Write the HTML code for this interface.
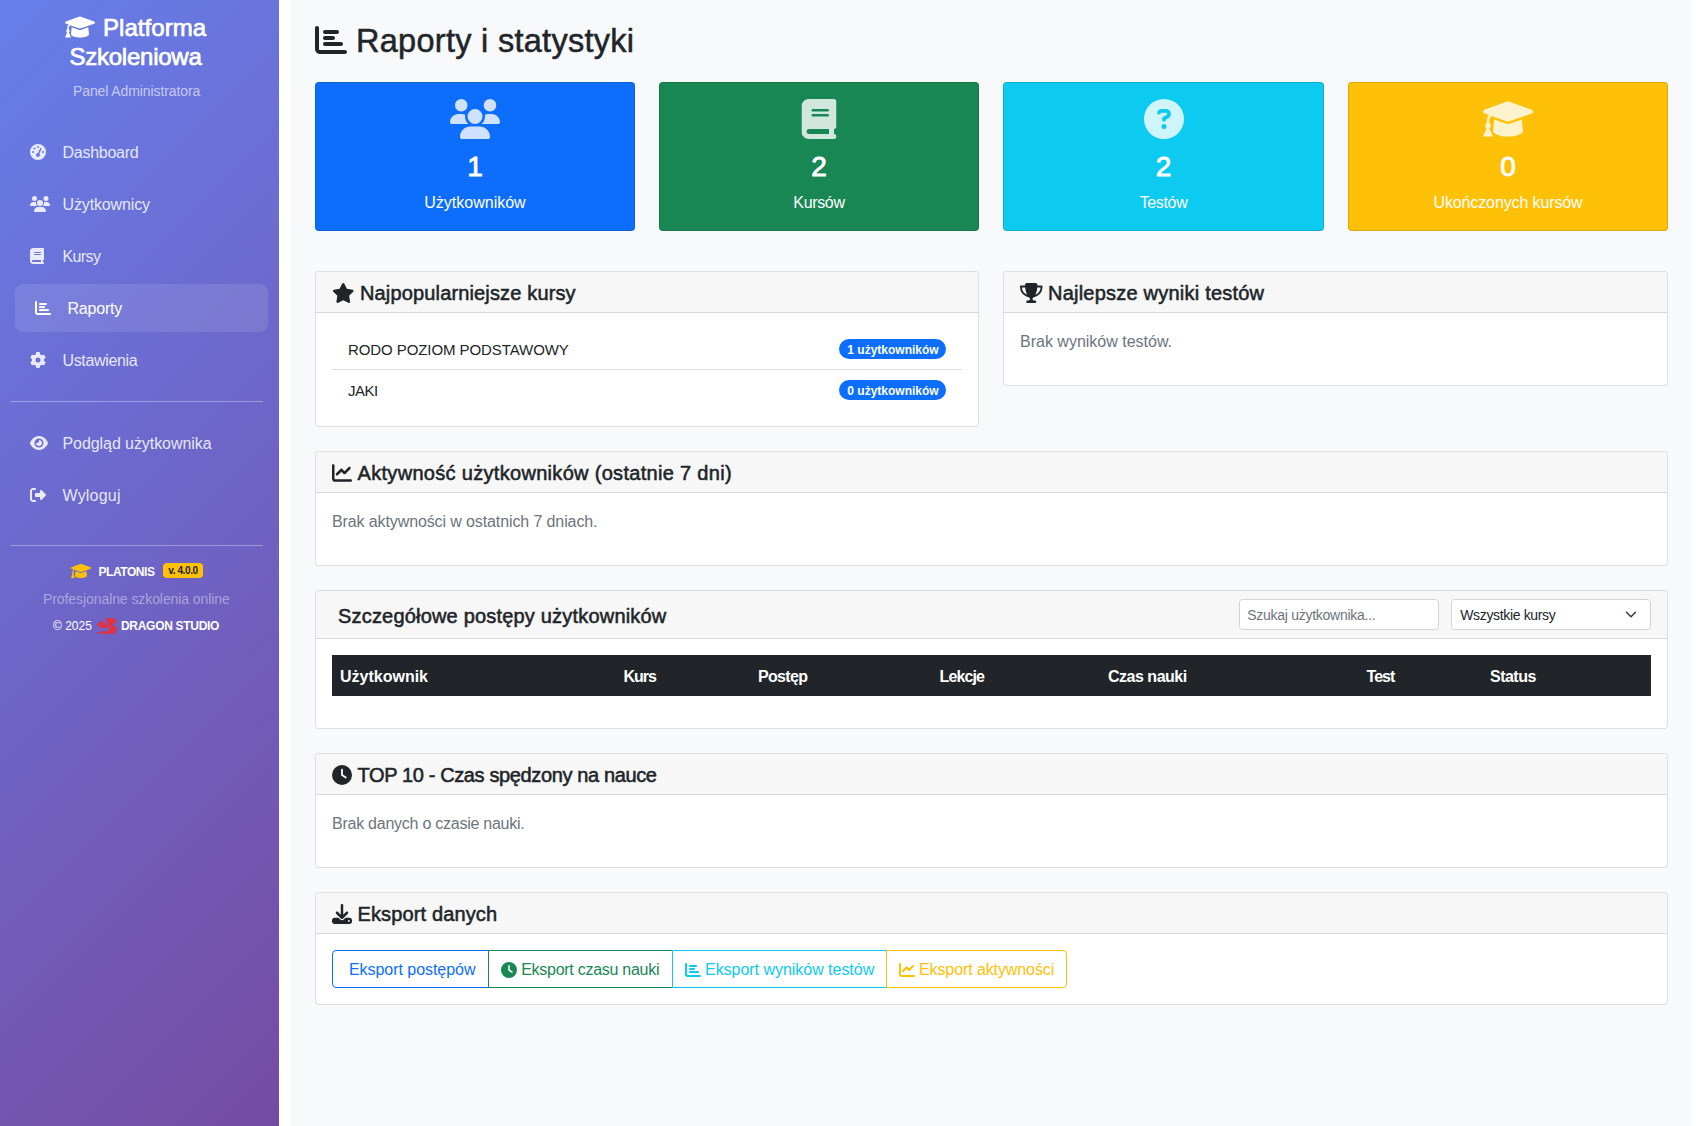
<!DOCTYPE html>
<html lang="pl">
<head>
<meta charset="utf-8">
<title>Raporty i statystyki</title>
<style>
*{box-sizing:border-box;margin:0;padding:0}
html,body{width:1696px;height:1126px;overflow:hidden;background:#fff;font-family:"Liberation Sans",sans-serif;color:#212529;font-size:16px;line-height:1.5}
.abs{position:absolute}
svg{display:block}
#sidebar{position:absolute;left:0;top:0;width:279px;height:1126px;background:linear-gradient(135deg,#667eea 0%,#764ba2 100%)}
#main{position:absolute;left:291px;top:0;width:1401px;height:1126px;background:#f8f9fa}
.t{position:absolute;white-space:nowrap}
.nav{position:absolute;left:15px;width:253px;height:48px;border-radius:8px}
.nav.active{background:rgba(255,255,255,0.1)}
.nav svg{position:absolute;fill:rgba(255,255,255,0.85)}
.nav .lbl{position:absolute;left:47.5px;top:13.3px;line-height:24px;color:rgba(255,255,255,0.85);font-size:16px;white-space:nowrap}
.nav.active svg{fill:#fff}
.nav.active .lbl{color:#fff}
.hr{position:absolute;left:10px;width:253px;height:1px;background:rgba(255,255,255,0.35)}
.stat{position:absolute;top:82px;width:320px;height:149px;border:1px solid rgba(0,0,0,0.125);border-radius:4px;color:#fff;text-align:center}
.stat svg{position:absolute;top:16px;left:50%;transform:translateX(-50%);fill:rgba(255,255,255,0.8)}
.stat .num{position:absolute;left:0;right:0;top:66.5px;font-size:28px;line-height:34px;-webkit-text-stroke:0.9px #fff}
.stat .lbl{position:absolute;left:0;right:0;top:108px;font-size:16px;line-height:24px}
.card{position:absolute;background:#fff;border:1px solid rgba(0,0,0,0.125);border-radius:4px;overflow:hidden}
.ch{position:absolute;left:0;top:0;right:0;height:41px;background:#f7f7f7;border-bottom:1px solid rgba(0,0,0,0.125)}
.ch .ttl{position:absolute;left:16px;top:9px;font-size:20px;line-height:24px;white-space:nowrap;color:#212529;-webkit-text-stroke:0.55px #212529}
.ch svg.hic{position:absolute;fill:#212529}
.muted{color:#6c757d}
.badge{position:absolute;height:20px;border-radius:10px;background:#0d6efd;color:#fff;font-size:12px;font-weight:bold;line-height:20px;padding-top:0.7px;padding-left:1px;text-align:center;white-space:nowrap}
.btn{position:absolute;top:950px;height:38px;border:1px solid;font-size:16px;line-height:24px;padding:6px 0;white-space:nowrap;background:#fff}
.btn svg{display:inline-block;vertical-align:-2px}
</style>
</head>
<body>
<div id="sidebar">
  <!-- header -->
  <svg class="abs" style="left:65px;top:14.5px" width="30" height="24" viewBox="0 0 640 512"><path fill="#fff" d="M623.1 136.9l-282.7-101.2c-13.73-4.91-28.7-4.91-42.43 0L16.05 136.9C6.438 140.4 0 149.6 0 159.8s6.438 19.45 16.05 22.89L76.41 204.3C58.09 226.3 48 253.6 48 282.4v23.05C36.05 311.1 27.94 324.5 27.94 339.9c0 14.23 7.125 26.52 17.83 34.38L0 480h128l-45.77-105.8C92.94 366.3 100.1 354 100.1 339.9c0-15.41-8.117-28.74-20.07-35.29V282.4c0-24.84 9.313-48.06 26.06-66.1l191.9 68.740C304.9 287.5 312.1 288 320 288s15.07-.5 21.23-2.875l281.9-101C633.6 180.9 640 171.7 640 160.9C640 150.7 633.6 140.4 623.1 136.9zM351.1 314.8C341.7 318.2 330.9 320 320 320c-10.92 0-21.69-1.814-32-5.406L143.1 262.6L128 408c0 35.34 85.960 72 192 72s192-36.66 192-72l-15.96-145.4L351.1 314.8z"/></svg>
  <div class="t" style="left:103px;top:13px;font-size:24px;line-height:29px;color:#fff;-webkit-text-stroke:0.7px #fff;letter-spacing:0.05px">Platforma</div>
  <div class="t" style="left:69.5px;top:42px;font-size:24px;line-height:29px;color:#fff;-webkit-text-stroke:0.7px #fff;letter-spacing:-0.25px">Szkoleniowa</div>
  <div class="t" style="left:73px;top:82px;font-size:14px;line-height:18px;color:rgba(255,255,255,0.62);letter-spacing:-0.1px">Panel Administratora</div>

  <div class="nav" style="top:128px">
    <svg style="left:15px;top:16px" width="16" height="16" viewBox="0 0 512 512"><path d="M0 256a256 256 0 1 1 512 0A256 256 0 1 1 0 256zM288 96a32 32 0 1 0 -64 0 32 32 0 1 0 64 0zM256 416c35.3 0 64-28.700 64-64c0-17.4-6.9-33.1-18.1-44.6L366 161.7c5.3-12.1-.2-26.3-12.3-31.6s-26.3 .2-31.6 12.3L257.9 288c-.6 0-1.3 0-1.9 0c-35.3 0-64 28.7-64 64s28.7 64 64 64zM176 144a32 32 0 1 0 -64 0 32 32 0 1 0 64 0zM96 288a32 32 0 1 0 0-64 32 32 0 1 0 0 64zm352-32a32 32 0 1 0 -64 0 32 32 0 1 0 64 0z"/></svg>
    <div class="lbl" style="letter-spacing:-0.27px">Dashboard</div>
  </div>
  <div class="nav" style="top:180px">
    <svg style="left:15px;top:16px" width="20" height="16" viewBox="0 0 640 512"><path d="M144 0a80 80 0 1 1 0 160A80 80 0 1 1 144 0zM512 0a80 80 0 1 1 0 160A80 80 0 1 1 512 0zM0 298.7C0 239.8 47.8 192 106.7 192h42.7c15.9 0 31 3.5 44.6 9.7c-1.3 7.2-1.9 14.7-1.9 22.3c0 38.2 16.8 72.5 43.3 96c-.2 0-.4 0-.7 0H21.3C9.6 320 0 310.4 0 298.7zM405.3 320c-.2 0-.4 0-.7 0c26.6-23.5 43.3-57.8 43.3-96c0-7.6-.7-15-1.9-22.3c13.6-6.3 28.7-9.7 44.6-9.7h42.7C592.2 192 640 239.8 640 298.7c0 11.8-9.600 21.3-21.3 21.3H405.3zM224 224a96 96 0 1 1 192 0 96 96 0 1 1 -192 0zM128 485.3C128 411.7 187.7 352 261.3 352H378.7C452.3 352 512 411.7 512 485.3c0 14.7-11.9 26.7-26.7 26.7H154.7c-14.7 0-26.7-11.9-26.7-26.7z"/></svg>
    <div class="lbl" style="letter-spacing:-0.13px">Użytkownicy</div>
  </div>
  <div class="nav" style="top:232px">
    <svg style="left:15px;top:16px" width="14" height="16" viewBox="0 0 448 512"><path d="M96 0C43 0 0 43 0 96V416c0 53 43 96 96 96H384h32c17.7 0 32-14.3 32-32s-14.3-32-32-32V384c17.700 0 32-14.3 32-32V32c0-17.7-14.3-32-32-32H384 96zm0 384H352v64H96c-17.7 0-32-14.3-32-32s14.3-32 32-32zm32-240c0-8.8 7.2-16 16-16H336c8.8 0 16 7.2 16 16s-7.2 16-16 16H144c-8.8 0-16-7.2-16-16zm16 48H336c8.8 0 16 7.2 16 16s-7.2 16-16 16H144c-8.8 0-16-7.2-16-16s7.2-16 16-16z"/></svg>
    <div class="lbl" style="letter-spacing:-0.6px">Kursy</div>
  </div>
  <div class="nav active" style="top:284px">
    <svg style="left:20px;top:16px" width="16" height="16" viewBox="0 0 512 512"><path d="M32 32c17.7 0 32 14.3 32 32V400c0 8.8 7.2 16 16 16H480c17.7 0 32 14.3 32 32s-14.3 32-32 32H80c-44.2 0-80-35.8-80-80V64C0 46.3 14.3 32 32 32zm96 96c0-17.7 14.3-32 32-32l192 0c17.7 0 32 14.3 32 32s-14.3 32-32 32l-192 0c-17.7 0-32-14.3-32-32zm32 64H288c17.7 0 32 14.3 32 32s-14.3 32-32 32H160c-17.7 0-32-14.3-32-32s14.3-32 32-32zm0 96H416c17.7 0 32 14.3 32 32s-14.3 32-32 32H160c-17.7 0-32-14.3-32-32s14.3-32 32-32z"/></svg>
    <div class="lbl" style="left:52.5px;letter-spacing:-0.2px">Raporty</div>
  </div>
  <div class="nav" style="top:336px">
    <svg style="left:15px;top:16px" width="16" height="16" viewBox="0 0 512 512"><path d="M495.9 166.6c3.2 8.7 .5 18.4-6.4 24.6l-43.3 39.4c1.1 8.3 1.7 16.8 1.7 25.4s-.6 17.1-1.7 25.4l43.3 39.4c6.9 6.2 9.6 15.9 6.4 24.6c-4.4 11.9-9.7 23.3-15.8 34.3l-4.7 8.1c-6.6 11-14 21.4-22.1 31.2c-5.9 7.2-15.7 9.6-24.5 6.8l-55.7-17.7c-13.4 10.3-28.2 18.9-44 25.4l-12.5 57.1c-2 9.1-9 16.3-18.2 17.8c-13.8 2.3-28 3.5-42.5 3.5s-28.7-1.2-42.5-3.5c-9.2-1.5-16.2-8.7-18.2-17.8l-12.5-57.1c-15.8-6.5-30.6-15.1-44-25.4L83.1 425.9c-8.8 2.8-18.6 .3-24.5-6.8c-8.1-9.8-15.5-20.2-22.1-31.2l-4.7-8.1c-6.1-11-11.4-22.4-15.8-34.3c-3.2-8.7-.5-18.4 6.4-24.6l43.3-39.4C64.6 273.1 64 264.6 64 256s.6-17.1 1.7-25.4L22.4 191.2c-6.9-6.2-9.6-15.9-6.4-24.6c4.4-11.9 9.7-23.3 15.8-34.3l4.7-8.1c6.6-11 14-21.4 22.1-31.2c5.9-7.2 15.7-9.6 24.5-6.8l55.7 17.7c13.4-10.3 28.2-18.9 44-25.4l12.5-57.1c2-9.1 9-16.3 18.2-17.8C227.3 1.2 241.5 0 256 0s28.7 1.2 42.5 3.5c9.2 1.5 16.2 8.7 18.2 17.8l12.5 57.1c15.8 6.5 30.6 15.1 44 25.4l55.7-17.7c8.8-2.8 18.6-.3 24.5 6.8c8.1 9.8 15.5 20.2 22.1 31.2l4.7 8.1c6.1 11 11.4 22.4 15.8 34.3zM256 336a80 80 0 1 0 0-160 80 80 0 1 0 0 160z"/></svg>
    <div class="lbl" style="letter-spacing:-0.35px">Ustawienia</div>
  </div>
  <div class="hr" style="top:401px"></div>
  <div class="nav" style="top:419px">
    <svg style="left:15px;top:16px" width="18" height="16" viewBox="0 0 576 512"><path d="M288 32c-80.8 0-145.5 36.8-192.6 80.6C48.6 156 17.3 208 2.5 243.7c-3.3 7.9-3.3 16.7 0 24.6C17.3 304 48.6 356 95.4 399.4C142.5 443.2 207.2 480 288 480s145.5-36.8 192.6-80.6c46.8-43.5 78.1-95.4 93-131.1c3.3-7.9 3.3-16.7 0-24.6c-14.9-35.7-46.2-87.7-93-131.1C433.5 68.8 368.8 32 288 32zM144 256a144 144 0 1 1 288 0 144 144 0 1 1 -288 0zm144-64c0 35.3-28.7 64-64 64c-7.1 0-13.9-1.2-20.3-3.3c-5.5-1.8-11.9 1.6-11.7 7.4c.3 6.9 1.3 13.8 3.2 20.7c13.7 51.2 66.4 81.6 117.6 67.9s81.6-66.4 67.9-117.6c-11.1-41.5-47.8-69.4-88.6-71.1c-5.8-.2-9.2 6.1-7.4 11.7c2.1 6.4 3.3 13.2 3.3 20.3z"/></svg>
    <div class="lbl" style="letter-spacing:-0.07px">Podgląd użytkownika</div>
  </div>
  <div class="nav" style="top:471px">
    <svg style="left:15px;top:16px" width="16" height="16" viewBox="0 0 512 512"><path d="M377.9 105.9L500.7 228.7c7.2 7.2 11.3 17.1 11.3 27.3s-4.1 20.1-11.3 27.3L377.9 406.1c-6.4 6.4-15 9.9-24 9.9c-18.7 0-33.9-15.2-33.9-33.9l0-62.1-128 0c-17.7 0-32-14.3-32-32l0-64c0-17.7 14.3-32 32-32l128 0 0-62.1c0-18.7 15.2-33.9 33.9-33.9c9 0 17.6 3.6 24 9.9zM160 96L96 96c-17.7 0-32 14.3-32 32l0 256c0 17.7 14.3 32 32 32l64 0c17.7 0 32 14.3 32 32s-14.3 32-32 32l-64 0c-53 0-96-43-96-96L0 128C0 75 43 32 96 32l64 0c17.7 0 32 14.3 32 32s-14.3 32-32 32z"/></svg>
    <div class="lbl" style="letter-spacing:0.2px">Wyloguj</div>
  </div>
  <div class="hr" style="top:545px"></div>
  <!-- footer -->
  <svg class="abs" style="left:70.5px;top:562.5px" width="20" height="16" viewBox="0 0 640 512"><path fill="#ffc107" d="M623.1 136.9l-282.7-101.2c-13.73-4.91-28.7-4.91-42.43 0L16.05 136.9C6.438 140.4 0 149.6 0 159.8s6.438 19.45 16.05 22.89L76.41 204.3C58.09 226.3 48 253.6 48 282.4v23.05C36.05 311.1 27.94 324.5 27.94 339.9c0 14.23 7.125 26.52 17.83 34.38L0 480h128l-45.77-105.8C92.94 366.3 100.1 354 100.1 339.9c0-15.41-8.117-28.74-20.07-35.29V282.4c0-24.84 9.313-48.06 26.06-66.1l191.9 68.740C304.9 287.5 312.1 288 320 288s15.07-.5 21.23-2.875l281.9-101C633.6 180.9 640 171.7 640 160.9C640 150.7 633.6 140.4 623.1 136.9zM351.1 314.8C341.7 318.2 330.9 320 320 320c-10.92 0-21.69-1.814-32-5.406L143.1 262.6L128 408c0 35.34 85.960 72 192 72s192-36.66 192-72l-15.96-145.4L351.1 314.8z"/></svg>
  <div class="t" style="left:98.5px;top:563.5px;font-size:12px;line-height:16px;font-weight:bold;color:#fff;letter-spacing:-0.45px">PLATONIS</div>
  <div class="t" style="left:163px;top:563px;width:40px;height:15px;border-radius:4px;background:#ffc107;color:#212529;font-size:10px;font-weight:bold;line-height:15px;text-align:center;letter-spacing:-0.4px">v. 4.0.0</div>
  <div class="t" style="left:43px;top:590px;font-size:14px;line-height:18px;color:rgba(255,255,255,0.42);letter-spacing:-0.08px">Profesjonalne szkolenia online</div>
  <div class="t" style="left:53px;top:618px;font-size:12px;line-height:16px;color:#fff">© 2025</div>
  <svg class="abs" style="left:96px;top:618px" width="21" height="16" viewBox="0 0 21 16"><path fill="#dc3545" stroke="#dc3545" stroke-width="0.4" stroke-linejoin="round" d="M0.2 7.6 L5.2 3.0 L10.3 6.0 L10.3 9.9 L3.2 9.9 L5.2 7.6 Z M9.4 0.2 L17.9 0.2 L20.7 3.7 L19.1 5.5 L14.5 5.5 L20.2 9.0 L20.7 12.5 L17.9 15.9 L0.2 15.2 L7.5 13.4 L14.0 12.5 L12.2 10.2 L11.0 4.2 L9.9 2.1 Z"/></svg>
  <div class="t" style="left:121px;top:618px;font-size:12px;line-height:16px;font-weight:bold;color:#fff;letter-spacing:-0.3px">DRAGON STUDIO</div>
</div>

<div id="main"></div>

<!-- page title -->
<svg class="abs" style="left:315px;top:23.5px" width="32" height="32" viewBox="0 0 512 512"><path fill="#212529" d="M32 32c17.7 0 32 14.3 32 32V400c0 8.8 7.2 16 16 16H480c17.7 0 32 14.3 32 32s-14.3 32-32 32H80c-44.2 0-80-35.8-80-80V64C0 46.3 14.3 32 32 32zm96 96c0-17.7 14.3-32 32-32l192 0c17.7 0 32 14.3 32 32s-14.3 32-32 32l-192 0c-17.7 0-32-14.3-32-32zm32 64H288c17.7 0 32 14.3 32 32s-14.3 32-32 32H160c-17.7 0-32-14.3-32-32s14.3-32 32-32zm0 96H416c17.7 0 32 14.3 32 32s-14.3 32-32 32H160c-17.7 0-32-14.3-32-32s14.3-32 32-32z"/></svg>
<div class="t" style="left:356px;top:22px;font-size:32.5px;line-height:38px;color:#212529;-webkit-text-stroke:0.5px #212529;letter-spacing:0.28px">Raporty i statystyki</div>

<!-- stat cards -->
<div class="stat" style="left:315px;background:#0d6efd">
  <svg width="50" height="40" viewBox="0 0 640 512"><path d="M144 0a80 80 0 1 1 0 160A80 80 0 1 1 144 0zM512 0a80 80 0 1 1 0 160A80 80 0 1 1 512 0zM0 298.7C0 239.8 47.8 192 106.7 192h42.7c15.9 0 31 3.5 44.6 9.7c-1.3 7.2-1.9 14.7-1.9 22.3c0 38.2 16.8 72.5 43.3 96c-.2 0-.4 0-.7 0H21.3C9.6 320 0 310.4 0 298.7zM405.3 320c-.2 0-.4 0-.7 0c26.6-23.5 43.3-57.8 43.3-96c0-7.6-.7-15-1.9-22.3c13.6-6.3 28.7-9.7 44.6-9.7h42.7C592.2 192 640 239.8 640 298.7c0 11.8-9.6 21.3-21.3 21.3H405.3zM224 224a96 96 0 1 1 192 0 96 96 0 1 1 -192 0zM128 485.3C128 411.7 187.7 352 261.3 352H378.7C452.3 352 512 411.7 512 485.3c0 14.7-11.9 26.7-26.7 26.7H154.7c-14.7 0-26.7-11.9-26.7-26.7z"/></svg>
  <div class="num">1</div><div class="lbl">Użytkowników</div>
</div>
<div class="stat" style="left:659px;background:#198754">
  <svg width="35" height="40" viewBox="0 0 448 512"><path d="M96 0C43 0 0 43 0 96V416c0 53 43 96 96 96H384h32c17.7 0 32-14.3 32-32s-14.3-32-32-32V384c17.7 0 32-14.3 32-32V32c0-17.7-14.3-32-32-32H384 96zm0 384H352v64H96c-17.7 0-32-14.3-32-32s14.3-32 32-32zm32-240c0-8.8 7.2-16 16-16H336c8.8 0 16 7.2 16 16s-7.2 16-16 16H144c-8.8 0-16-7.2-16-16zm16 48H336c8.8 0 16 7.2 16 16s-7.2 16-16 16H144c-8.8 0-16-7.2-16-16s7.2-16 16-16z"/></svg>
  <div class="num">2</div><div class="lbl" style="letter-spacing:-0.35px">Kursów</div>
</div>
<div class="stat" style="left:1003px;width:321px;background:#0dcaf0">
  <svg width="40" height="40" viewBox="0 0 512 512"><path d="M256 512A256 256 0 1 0 256 0a256 256 0 1 0 0 512zM169.8 165.3c7.9-22.3 29.1-37.3 52.8-37.3h58.3c34.9 0 63.1 28.3 63.1 63.1c0 22.6-12.1 43.5-31.7 54.8L280 264.4c-.2 13-10.9 23.6-24 23.6c-13.3 0-24-10.7-24-24V250.5c0-8.6 4.6-16.5 12.1-20.8l44.3-25.4c4.7-2.7 7.6-7.7 7.6-13.1c0-8.4-6.8-15.1-15.1-15.1H222.6c-3.4 0-6.4 2.1-7.5 5.3l-.4 1.2c-4.4 12.5-18.2 19-30.6 14.6s-19-18.2-14.6-30.6l.4-1.2zM224 352a32 32 0 1 1 64 0 32 32 0 1 1 -64 0z"/></svg>
  <div class="num">2</div><div class="lbl" style="letter-spacing:-0.35px">Testów</div>
</div>
<div class="stat" style="left:1348px;background:#ffc107">
  <svg width="50" height="40" viewBox="0 0 640 512"><path d="M623.1 136.9l-282.7-101.2c-13.73-4.91-28.7-4.91-42.43 0L16.05 136.9C6.438 140.4 0 149.6 0 159.8s6.438 19.45 16.05 22.89L76.41 204.3C58.09 226.3 48 253.6 48 282.4v23.05C36.05 311.1 27.94 324.5 27.94 339.9c0 14.23 7.125 26.52 17.83 34.38L0 480h128l-45.77-105.8C92.94 366.3 100.1 354 100.1 339.9c0-15.41-8.117-28.74-20.07-35.29V282.4c0-24.84 9.313-48.06 26.06-66.1l191.9 68.740C304.9 287.5 312.1 288 320 288s15.07-.5 21.23-2.875l281.9-101C633.6 180.9 640 171.7 640 160.9C640 150.7 633.6 140.4 623.1 136.9zM351.1 314.8C341.7 318.2 330.9 320 320 320c-10.92 0-21.69-1.814-32-5.406L143.1 262.6L128 408c0 35.34 85.960 72 192 72s192-36.66 192-72l-15.96-145.4L351.1 314.8z"/></svg>
  <div class="num">0</div><div class="lbl" style="letter-spacing:-0.12px">Ukończonych kursów</div>
</div>
<!-- panel 1: popular courses -->
<div class="card" style="left:315px;top:271px;width:664px;height:156px">
  <div class="ch"><svg class="hic" style="left:16px;top:10.5px" width="22.5" height="20" viewBox="0 0 576 512"><path d="M316.9 18C311.6 7 300.4 0 288.1 0s-23.4 7-28.8 18L195 150.3 51.4 171.5c-12 1.8-22 10.2-25.7 21.7s-.7 24.2 7.9 32.7L137.8 329 113.2 474.7c-2 12 3 24.2 12.9 31.3s23 8 33.8 2.3l128.3-68.5 128.3 68.5c10.8 5.7 23.900 4.9 33.8-2.3s14.9-19.3 12.9-31.3L438.5 329 542.7 225.9c8.6-8.5 11.7-21.2 7.9-32.7s-13.7-19.9-25.7-21.7L381.2 150.3 316.9 18z"/></svg><div class="ttl" style="left:44.0px;letter-spacing:0.15px">Najpopularniejsze kursy</div></div>
  <div class="t" style="left:32px;top:66px;font-size:15px;line-height:24px;letter-spacing:-0.08px">RODO POZIOM PODSTAWOWY</div>
  <div class="abs" style="left:16px;top:97px;width:630px;height:1px;background:rgba(0,0,0,0.125)"></div>
  <div class="t" style="left:32px;top:107px;font-size:15px;line-height:24px;letter-spacing:-0.5px">JAKI</div>
  <div class="badge" style="left:523px;top:67px;width:107px">1 użytkowników</div>
  <div class="badge" style="left:523px;top:108px;width:107px">0 użytkowników</div>
</div>
<!-- panel 2: best results -->
<div class="card" style="left:1003px;top:271px;width:665px;height:115px">
  <div class="ch"><svg class="hic" style="left:16px;top:10.5px" width="22.5" height="20" viewBox="0 0 576 512"><path d="M400 0H176c-26.5 0-48.1 21.8-47.1 48.2c.2 5.3 .4 10.6 .7 15.8H24C10.7 64 0 74.7 0 88c0 92.6 33.5 157 78.5 200.7c44.3 43.1 98.3 64.8 138.1 75.8c23.4 6.5 39.4 26 39.4 45.6c0 20.9-17 37.9-37.9 37.9H192c-17.7 0-32 14.3-32 32s14.3 32 32 32H384c17.7 0 32-14.3 32-32s-14.3-32-32-32H357.9C337 448 320 431 320 410.1c0-19.6 15.9-39.2 39.4-45.6c39.9-11 93.9-32.7 138.2-75.8C542.5 245 576 180.6 576 88c0-13.3-10.7-24-24-24H446.4c.3-5.2 .5-10.4 .7-15.8C448.1 21.8 426.5 0 400 0zM48.9 112h84.4c9.1 90.1 29.2 150.3 51.9 190.6c-24.9-11-50.8-26.5-73.2-48.3c-32-31.1-58-76-63-142.3zM464.1 254.3c-22.4 21.8-48.3 37.3-73.2 48.3c22.7-40.3 42.8-100.5 51.9-190.6h84.4c-5.1 66.3-31.1 111.2-63 142.3z"/></svg><div class="ttl" style="left:44.0px;letter-spacing:0.22px">Najlepsze wyniki testów</div></div>
  <div class="t muted" style="left:16px;top:58px;font-size:16px;line-height:24px">Brak wyników testów.</div>
</div>
<!-- panel 3: activity -->
<div class="card" style="left:315px;top:451px;width:1353px;height:115px">
  <div class="ch"><svg class="hic" style="left:16px;top:10.5px" width="20.0" height="20" viewBox="0 0 512 512"><path d="M64 64c0-17.7-14.3-32-32-32S0 46.3 0 64V400c0 44.2 35.8 80 80 80H480c17.7 0 32-14.3 32-32s-14.3-32-32-32H80c-8.8 0-16-7.2-16-16V64zm406.6 86.6c12.5-12.5 12.5-32.8 0-45.3s-32.8-12.5-45.3 0L320 210.7l-57.4-57.4c-12.5-12.5-32.8-12.5-45.3 0l-112 112c-12.5 12.5-12.5 32.8 0 45.3s32.8 12.5 45.3 0L240 221.3l57.4 57.4c12.5 12.5 32.8 12.5 45.3 0l128-128z"/></svg><div class="ttl" style="left:41.5px;letter-spacing:0.31px">Aktywność użytkowników (ostatnie 7 dni)</div></div>
  <div class="t muted" style="left:16px;top:58px;font-size:16px;line-height:24px;letter-spacing:-0.11px">Brak aktywności w ostatnich 7 dniach.</div>
</div>
<!-- panel 4: details -->
<div class="card" style="left:315px;top:590px;width:1353px;height:139px">
  <div class="ch" style="height:48px"><div class="ttl" style="left:22px;top:13px;letter-spacing:0.19px">Szczegółowe postępy użytkowników</div>
    <div class="abs" style="left:923px;top:8px;width:200px;height:31px;background:#fff;border:1px solid #ced4da;border-radius:3.5px"><div class="t" style="left:7.2px;top:5px;font-size:14px;line-height:20px;color:#6c757d;letter-spacing:-0.27px">Szukaj użytkownika...</div></div>
    <div class="abs" style="left:1135px;top:8px;width:200px;height:31px;background:#fff;border:1px solid #ced4da;border-radius:3.5px"><div class="t" style="left:8.2px;top:5px;font-size:14px;line-height:20px;color:#212529;letter-spacing:-0.34px">Wszystkie kursy</div>
      <svg class="abs" style="left:173px;top:10px" width="12" height="9" viewBox="0 0 16 12"><path fill="none" stroke="#343a40" stroke-linecap="round" stroke-linejoin="round" stroke-width="2" d="m2 3 6 6 6-6"/></svg></div>
  </div>
  <div class="abs" style="left:16px;top:64px;width:1319px;height:41px;background:#212529;color:#fff;font-weight:bold;font-size:16px;line-height:24px">
    <div class="t" style="left:8px;top:9.5px">Użytkownik</div>
    <div class="t" style="left:291.5px;top:9.5px;letter-spacing:-1px">Kurs</div>
    <div class="t" style="left:426px;top:9.5px;letter-spacing:-0.68px">Postęp</div>
    <div class="t" style="left:607.5px;top:9.5px;letter-spacing:-0.88px">Lekcje</div>
    <div class="t" style="left:776px;top:9.5px;letter-spacing:-0.49px">Czas nauki</div>
    <div class="t" style="left:1034.5px;top:9.5px;letter-spacing:-0.93px">Test</div>
    <div class="t" style="left:1158px;top:9.5px;letter-spacing:-0.52px">Status</div>
  </div>
</div>
<!-- panel 5: top 10 -->
<div class="card" style="left:315px;top:753px;width:1353px;height:115px">
  <div class="ch"><svg class="hic" style="left:16px;top:10.5px" width="20.0" height="20" viewBox="0 0 512 512"><path d="M256 0a256 256 0 1 1 0 512A256 256 0 1 1 256 0zM232 120V256c0 8 4 15.5 10.7 20l96 64c11 7.4 25.9 4.4 33.3-6.7s4.4-25.9-6.7-33.3L280 243.2V120c0-13.3-10.7-24-24-24s-24 10.7-24 24z"/></svg><div class="ttl" style="left:41.5px;letter-spacing:-0.37px">TOP 10 - Czas spędzony na nauce</div></div>
  <div class="t muted" style="left:16px;top:58px;font-size:16px;line-height:24px;letter-spacing:-0.25px">Brak danych o czasie nauki.</div>
</div>
<!-- panel 6: export -->
<div class="card" style="left:315px;top:892px;width:1353px;height:113px">
  <div class="ch"><svg class="hic" style="left:16px;top:10.5px" width="20.0" height="20" viewBox="0 0 512 512"><path d="M288 32c0-17.7-14.3-32-32-32s-32 14.3-32 32V274.7l-73.4-73.4c-12.5-12.5-32.8-12.5-45.3 0s-12.5 32.8 0 45.3l128 128c12.5 12.5 32.8 12.5 45.3 0l128-128c12.5-12.5 12.5-32.8 0-45.3s-32.8-12.5-45.3 0L288 274.7V32zM64 352c-35.3 0-64 28.7-64 64v32c0 35.3 28.7 64 64 64H448c35.3 0 64-28.7 64-64V416c0-35.3-28.7-64-64-64H346.5l-45.3 45.3c-25 25-65.5 25-90.5 0L165.5 352H64zm368 56a24 24 0 1 1 0 48 24 24 0 1 1 0-48z"/></svg><div class="ttl" style="left:41.5px;letter-spacing:0.13px">Eksport danych</div></div>
</div>
<div class="btn" style="left:332px;width:157px;border-color:#0d6efd;color:#0d6efd;border-radius:4px 0 0 4px"><span class="t" style="left:16px;top:7px;letter-spacing:-0.05px">Eksport postępów</span></div>
<div class="btn" style="left:488px;width:185px;border-color:#198754;color:#198754"><svg class="abs" style="left:12px;top:11px" width="16" height="16" viewBox="0 0 512 512"><path fill="#198754" d="M256 0a256 256 0 1 1 0 512A256 256 0 1 1 256 0zM232 120V256c0 8 4 15.5 10.7 20l96 64c11 7.4 25.9 4.4 33.3-6.7s4.4-25.9-6.7-33.3L280 243.2V120c0-13.3-10.7-24-24-24s-24 10.7-24 24z"/></svg><span class="t" style="left:32.2px;top:7px;letter-spacing:-0.27px">Eksport czasu nauki</span></div>
<div class="btn" style="left:672px;width:215px;border-color:#0dcaf0;color:#0dcaf0"><svg class="abs" style="left:12px;top:11px" width="16" height="16" viewBox="0 0 512 512"><path fill="#0dcaf0" d="M32 32c17.7 0 32 14.3 32 32V400c0 8.8 7.2 16 16 16H480c17.7 0 32 14.3 32 32s-14.3 32-32 32H80c-44.2 0-80-35.8-80-80V64C0 46.3 14.3 32 32 32zm96 96c0-17.7 14.3-32 32-32l192 0c17.7 0 32 14.3 32 32s-14.3 32-32 32l-192 0c-17.7 0-32-14.3-32-32zm32 64H288c17.7 0 32 14.3 32 32s-14.3 32-32 32H160c-17.7 0-32-14.3-32-32s14.3-32 32-32zm0 96H416c17.7 0 32 14.3 32 32s-14.3 32-32 32H160c-17.7 0-32-14.3-32-32s14.3-32 32-32z"/></svg><span class="t" style="left:32px;top:7px;letter-spacing:-0.03px">Eksport wyników testów</span></div>
<div class="btn" style="left:886px;width:181px;border-color:#ffc107;color:#ffc107;border-radius:0 4px 4px 0"><svg class="abs" style="left:12px;top:11px" width="16" height="16" viewBox="0 0 512 512"><path fill="#ffc107" d="M64 64c0-17.7-14.3-32-32-32S0 46.3 0 64V400c0 44.2 35.8 80 80 80H480c17.7 0 32-14.3 32-32s-14.3-32-32-32H80c-8.8 0-16-7.2-16-16V64zm406.6 86.6c12.5-12.5 12.5-32.8 0-45.3s-32.8-12.5-45.3 0L320 210.7l-57.4-57.4c-12.5-12.5-32.8-12.5-45.3 0l-112 112c-12.5 12.5-12.5 32.8 0 45.3s32.8 12.5 45.3 0L240 221.3l57.4 57.4c12.5 12.5 32.8 12.5 45.3 0l128-128z"/></svg><span class="t" style="left:32px;top:7px;letter-spacing:-0.1px">Eksport aktywności</span></div>
</body>
</html>
